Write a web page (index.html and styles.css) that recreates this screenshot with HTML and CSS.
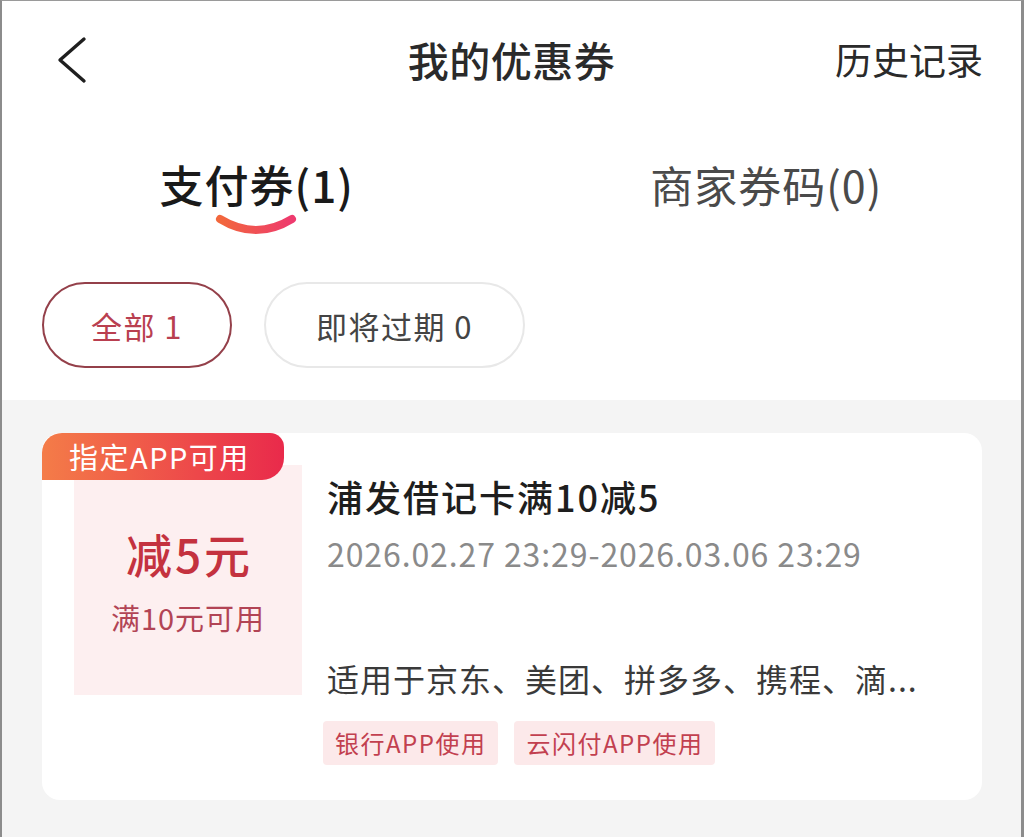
FILE: index.html
```html
<!DOCTYPE html>
<html lang="zh-CN">
<head>
    <meta charset="UTF-8">
    <meta name="viewport" content="width=device-width, initial-scale=1.0">
    <title>我的优惠券</title>
    <link rel="stylesheet" href="styles.css">
</head>
<body>
<div class="page">
    <div class="topbar">
        <span class="back">
            <svg width="32" height="48" viewBox="0 0 32 48"><polyline points="28,3 4,24 28,45" fill="none" stroke="#1f1f1f" stroke-width="3.4" stroke-linecap="round" stroke-linejoin="round"/></svg>
        </span>
        <h1>我的优惠券</h1>
        <span class="history">历史记录</span>
    </div>

    <div class="tabs">
        <div class="tab active">
            <span>支付券(1)</span>
            <svg class="smile" width="84" height="28" viewBox="0 0 84 28">
                <defs>
                    <linearGradient id="sg" x1="0" y1="0" x2="1" y2="0">
                        <stop offset="0" stop-color="#f2673c"/>
                        <stop offset="1" stop-color="#ee3a6e"/>
                    </linearGradient>
                </defs>
                <path d="M6 8 Q42 30 78 8" fill="none" stroke="url(#sg)" stroke-width="8" stroke-linecap="round"/>
            </svg>
        </div>
        <div class="tab"><span>商家券码(0)</span></div>
    </div>

    <div class="filters">
        <span class="chip on">全部 1</span>
        <span class="chip">即将过期 0</span>
    </div>

    <div class="list">
        <div class="coupon">
            <span class="badge">指定APP可用</span>
            <div class="amount">
                <div class="off">减5元</div>
                <div class="cond">满10元可用</div>
            </div>
            <div class="info">
                <div class="name">浦发借记卡满10减5</div>
                <div class="date">2026.02.27 23:29-2026.03.06 23:29</div>
                <div class="desc">适用于京东、美团、拼多多、携程、滴...</div>
                <div class="tags">
                    <span class="tag">银行APP使用</span>
                    <span class="tag">云闪付APP使用</span>
                </div>
            </div>
        </div>
    </div>
</div>
</body>
</html>
```

FILE: styles.css
```css
* { box-sizing: border-box; }
html, body { margin: 0; padding: 0; }
body { font-family: "Noto Sans CJK SC", "Noto Sans", sans-serif; color: #222; background: #fff; }
.page { width: 1024px; height: 837px; overflow: hidden; border-left: 2px solid #8c8c8c; border-right: 3px solid #8c8c8c; border-top: 1px solid #9a9a9a; background: #f4f4f4; }

.topbar { height: 119px; background: #fff; display: flex; align-items: center; justify-content: space-between; padding: 0 38px 0 54px; position: relative; }
.back { display: flex; width: 32px; height: 48px; margin-top: -2px; }
.topbar h1 { margin: 0; font-size: 41px; font-weight: 500; color: #2a2a2a; position: absolute; left: 0; right: 0; text-align: center; top: 28px; pointer-events: none; letter-spacing: 0.5px; }
.history { font-size: 37px; color: #2a2a2a; margin-top: -4px; }

.tabs { display: flex; background: #fff; height: 128px; }
.tab { flex: 1; display: flex; flex-direction: column; align-items: center; padding-top: 38px; font-size: 43px; color: #4a4a4a; line-height: 52px; letter-spacing: 1px; }
.tab.active { color: #1a1a1a; font-weight: 500; font-size: 44px; }
.smile { margin-top: 1px; margin-left: -2px; }

.filters { background: #fff; display: flex; gap: 32px; padding: 34px 40px 32px; }
.chip { height: 86px; border: 2px solid #e8e8e8; border-radius: 43px; display: flex; align-items: center; justify-content: center; font-size: 31px; color: #444; width: 261px; letter-spacing: 1.5px; }
.chip.on { width: 190px; border-color: #94404a; color: #b93f50; }

.list { padding: 33px 39px 0 40px; }
.coupon { position: relative; background: #fff; border-radius: 18px; display: flex; height: 367px; padding: 32px 0 0 32px; }
.badge { position: absolute; left: 0; top: 0; width: 242px; height: 47px; background: linear-gradient(90deg, #f47c48, #e92a4b); color: #fff; font-size: 29px; line-height: 47px; padding-left: 27px; border-radius: 20px 14px 22px 0; z-index: 1; letter-spacing: 1.5px; }
.amount { width: 228px; height: 230px; background: #fdeff0; display: flex; flex-direction: column; align-items: center; padding-top: 60px; }
.off { font-size: 46px; font-weight: 500; color: #c4323f; line-height: 56px; letter-spacing: 3px; margin-right: -3px; }
.cond { font-size: 29px; color: #b24455; line-height: 40px; margin-top: 16px; letter-spacing: 1px; }

.info { margin-left: 25px; display: flex; flex-direction: column; padding-top: 8px; }
.name { font-size: 36px; font-weight: 500; color: #1e1e1e; line-height: 46px; letter-spacing: 2px; }
.date { font-size: 32px; color: #8a8a8a; line-height: 40px; margin-top: 14px; letter-spacing: 0.9px; }
.desc { font-size: 32px; color: #3a3a3a; line-height: 40px; margin-top: 85px; letter-spacing: 1px; }
.tags { display: flex; gap: 16px; margin-top: 23px; margin-left: -4px; }
.tag { height: 44px; line-height: 44px; padding: 0 12px; background: #fce9ea; color: #c2404f; font-size: 24px; border-radius: 4px; letter-spacing: 1.5px; }
```
